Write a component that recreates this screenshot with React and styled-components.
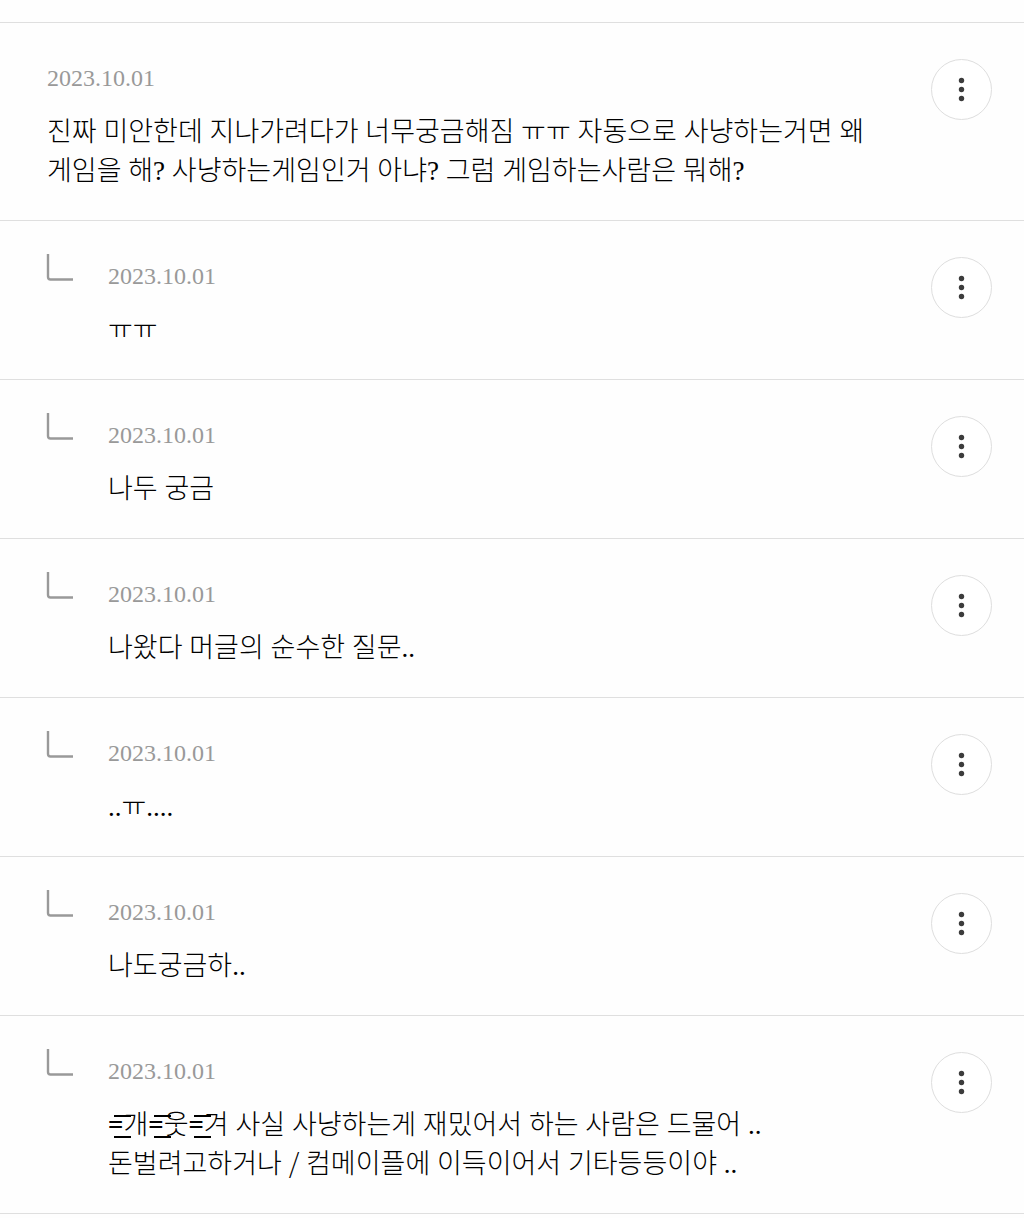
import React from "react";
import styled, { createGlobalStyle } from "styled-components";

const GlobalStyle = createGlobalStyle`
  *, *::before, *::after { box-sizing: border-box; }
  body {
    margin: 0;
    background: #fefefe;
    color: #000;
    font-family: "Liberation Serif", "Noto Sans CJK KR", serif;
    font-weight: 300;
  }
`;

const CommentList = styled.ul`
  list-style: none;
  margin: 0;
  padding: 22px 0 0;
  border-bottom: 1px solid #dfdfdf;
`;

const Comment = styled.li`
  display: flex;
  align-items: flex-start;
  gap: 24px;
  padding: 0 32px 29px 47px;
  border-top: 1px solid #dfdfdf;
`;

const ReplyMark = styled.svg`
  flex: none;
  width: 28px;
  height: 28px;
  margin: 32px 10px 0 -1px;
`;

const Content = styled.div`
  flex: 1;
  min-width: 0;
  padding-top: 41px;
`;

const PostedOn = styled.time`
  display: block;
  margin-bottom: 21px;
  font-size: 24px;
  line-height: 28px;
  color: #999;
`;

const Message = styled.p`
  margin: 0;
  font-size: 27px;
  line-height: 39px;
  white-space: pre-line;
  word-break: keep-all;
`;

/* An equals sign with long strokes above and below that run into the next letter. */
const SpeedLines = styled.span`
  position: relative;
  font-weight: 700;

  &::after {
    content: "";
    position: absolute;
    left: 6px;
    top: 5px;
    width: 17px;
    height: 23px;
    border: solid #000;
    border-width: 2px 0;
  }
`;

const Slash = styled.span`
  font-family: "Noto Sans CJK KR", sans-serif;
  line-height: 1;
`;

const MenuButton = styled.button`
  flex: none;
  display: grid;
  place-items: center;
  width: 61px;
  height: 61px;
  margin-top: 36px;
  padding: 0;
  border: 1px solid #dedede;
  border-radius: 50%;
  background: #fff;
  cursor: pointer;
`;

const comments = [
  {
    text: "진짜 미안한데 지나가려다가 너무궁금해짐 ㅠㅠ 자동으로 사냥하는거면 왜 게임을 해? 사냥하는게임인거 아냐? 그럼 게임하는사람은 뭐해?",
  },
  { reply: true, text: "ㅠㅠ" },
  { reply: true, text: "나두 궁금" },
  { reply: true, text: "나왔다 머글의 순수한 질문.." },
  { reply: true, text: "..ㅠ...." },
  { reply: true, text: "나도궁금하.." },
  {
    reply: true,
    text: "=개=웃=겨 사실 사냥하는게 재밌어서 하는 사람은 드물어 ..\n돈벌려고하거나 / 컴메이플에 이득이어서 기타등등이야 ..",
  },
];

function renderText(text) {
  return text.split(/([=/])/).map((part, i) => {
    if (part === "=") return <SpeedLines key={i}>=</SpeedLines>;
    if (part === "/") return <Slash key={i}>/</Slash>;
    return part;
  });
}

export default function App() {
  return (
    <>
      <GlobalStyle />
      <CommentList>
        {comments.map(({ reply, text }) => (
          <Comment key={text}>
            {reply && (
              <ReplyMark viewBox="0 0 28 28" aria-hidden="true">
                <path
                  d="M2 1V24Q2 26.5 4.5 26.5H27"
                  fill="none"
                  stroke="#999"
                  strokeWidth="2.4"
                />
              </ReplyMark>
            )}
            <Content>
              <PostedOn dateTime="2023-10-01">2023.10.01</PostedOn>
              <Message>{renderText(text)}</Message>
            </Content>
            <MenuButton type="button" aria-label="메뉴">
              <svg width="7" height="25" viewBox="0 0 7 25" fill="#3c3c3c" aria-hidden="true">
                <circle cx="3.5" cy="3.5" r="2.7" />
                <circle cx="3.5" cy="12.5" r="2.7" />
                <circle cx="3.5" cy="21.5" r="2.7" />
              </svg>
            </MenuButton>
          </Comment>
        ))}
      </CommentList>
    </>
  );
}
